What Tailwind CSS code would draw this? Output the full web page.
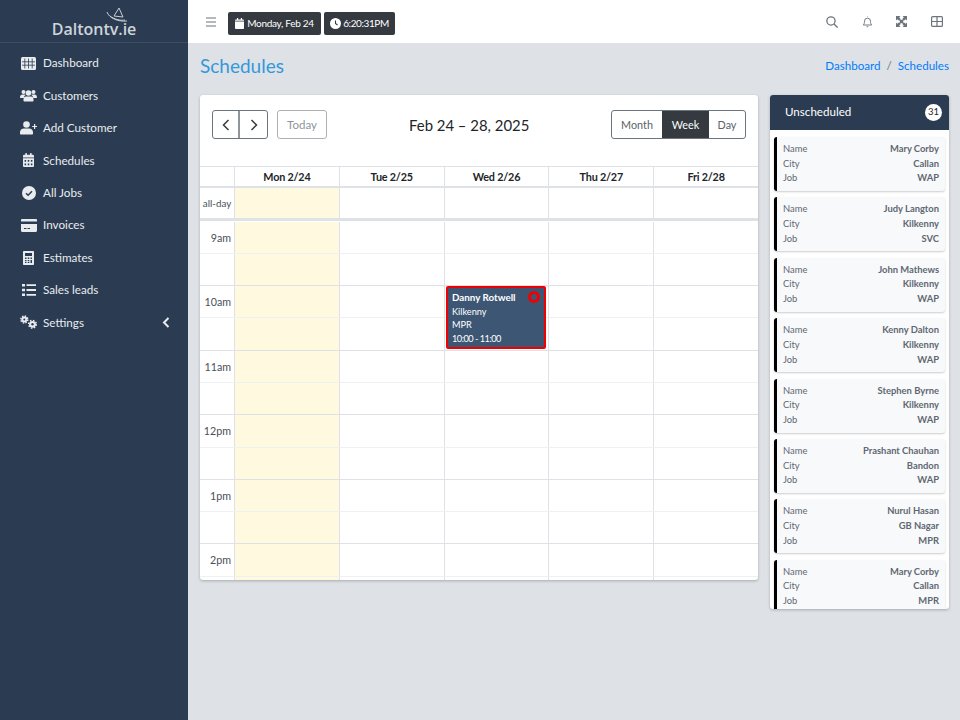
<!DOCTYPE html>
<html lang="en">
<head>
  <meta charset="UTF-8">
  <title>Schedules</title>
  <script src="https://cdn.jsdelivr.net/npm/@tailwindcss/browser@4"></script>
</head>
<body class="font-['Lato','Noto_Sans',sans-serif] bg-[#dee2e6] text-[#343a40] h-[720px] overflow-hidden">
  <div class="flex h-[720px]">
    <!-- Sidebar -->
    <aside class="w-[188px] shrink-0 bg-[#2b3c52] text-[#e9ecef]">
      <div class="h-[43px] border-b border-[#3d4d62] relative flex justify-center items-end pb-[2px]">
        <svg class="absolute left-[106px] top-[7px] w-[22px] h-[16px]" viewBox="0 0 22 16" fill="none" stroke="#c9ced4" stroke-width="1"><path d="M1 5c2 6 11 10 20 9"/><path d="M13 1L8 9l9 1z"/><path d="M4 9c4 3 10 5 15 4"/></svg>
        <span class="font-['Open_Sans'] font-semibold text-[16px] leading-[22px] text-[#ced4da]">Daltontv.ie</span>
      </div>
      <nav class="pt-[4px] text-[11.700px]">
        <a class="flex items-center h-[32.400px] pl-[21px] gap-[7px]"><svg class="w-[15px] h-[13px]" viewBox="0 0 15 13"><rect width="15" height="13" rx="1.500" fill="currentColor"/><path d="M3.800 1.500v10M7.500 1.500v10M11.200 1.500v10M1 4.800h13M1 8.200h13" stroke="#2b3c52" stroke-width=".8"/></svg>Dashboard</a>
        <a class="flex items-center h-[32.400px] pl-[20px] gap-[6px]"><svg class="w-[17px] h-[15px]" viewBox="0 0 17 14" fill="currentColor"><circle cx="3.500" cy="3.500" r="2"/><circle cx="13.500" cy="3.500" r="2"/><circle cx="8.500" cy="4.500" r="2.800"/><path d="M0 9c0-2 1-3 2.500-3h2c.5 0 1 .2 1.300.5C4.500 7.300 4 8.200 3.800 9.500H1c-.6 0-1-.1-1-.5zM17 9c0-2-1-3-2.500-3h-2c-.5 0-1 .2-1.300.500 1.300.8 1.800 1.700 2 3H16c.6 0 1-.1 1-.5zM6 8h5c1.500 0 2.500 1.200 2.500 2.800V12c0 .6-.4 1-1 1h-8c-.6 0-1-.4-1-1v-1.200C3.500 9.200 4.500 8 6 8z"/></svg>Customers</a>
        <a class="flex items-center h-[32.400px] pl-[20px] gap-[6px]"><svg class="w-[17px] h-[14px]" viewBox="0 0 17 14" fill="currentColor"><circle cx="6.500" cy="3.500" r="3.300"/><path d="M4 7.500h5c2.200 0 4 1.600 4 3.700V12.500c0 .6-.4 1-1 1H1c-.6 0-1-.4-1-1v-1.300C0 9.100 1.800 7.500 4 7.500zM14 3h1.200v1.900H17v1.200h-1.800V8H14V6.100h-1.800V4.900H14z"/></svg>Add Customer</a>
        <a class="flex items-center h-[32.400px] pl-[23px] gap-[9px]"><svg class="w-[11px] h-[14px]" viewBox="0 0 448 512" preserveAspectRatio="none" fill="currentColor"><path d="M0 464c0 26.500 21.500 48 48 48h352c26.500 0 48-21.500 48-48V192H0v272zm320-196c0-6.600 5.400-12 12-12h40c6.600 0 12 5.400 12 12v40c0 6.600-5.400 12-12 12h-40c-6.600 0-12-5.400-12-12v-40zm0 128c0-6.600 5.400-12 12-12h40c6.600 0 12 5.400 12 12v40c0 6.600-5.400 12-12 12h-40c-6.600 0-12-5.400-12-12v-40zM192 268c0-6.600 5.400-12 12-12h40c6.600 0 12 5.400 12 12v40c0 6.600-5.400 12-12 12h-40c-6.600 0-12-5.400-12-12v-40zm0 128c0-6.600 5.400-12 12-12h40c6.600 0 12 5.400 12 12v40c0 6.600-5.400 12-12 12h-40c-6.600 0-12-5.400-12-12v-40zM64 268c0-6.600 5.400-12 12-12h40c6.600 0 12 5.400 12 12v40c0 6.600-5.400 12-12 12H76c-6.600 0-12-5.400-12-12v-40zm0 128c0-6.600 5.400-12 12-12h40c6.600 0 12 5.400 12 12v40c0 6.600-5.400 12-12 12H76c-6.600 0-12-5.400-12-12v-40zM400 64h-48V16c0-8.800-7.200-16-16-16h-32c-8.800 0-16 7.200-16 16v48H160V16c0-8.800-7.200-16-16-16h-32c-8.800 0-16 7.200-16 16v48H48C21.500 64 0 85.500 0 112v48h448v-48c0-26.500-21.500-48-48-48z"/></svg>Schedules</a>
        <a class="flex items-center h-[32.400px] pl-[22px] gap-[7px]"><svg class="w-[14px] h-[14px]" viewBox="0 0 14 14"><circle cx="7" cy="7" r="7" fill="currentColor"/><path d="M4 7.200l2.100 2.100L10 5.300" fill="none" stroke="#2b3c52" stroke-width="1.500"/></svg>All Jobs</a>
        <a class="flex items-center h-[32.400px] pl-[21px] gap-[6px]"><svg class="w-[16px] h-[13px]" viewBox="0 0 16 13" fill="currentColor"><path d="M1.200 0h13.600c.7 0 1.200.5 1.200 1.200V2.500H0V1.200C0 .5.500 0 1.200 0zM0 5h16v6.800c0 .7-.5 1.200-1.200 1.200H1.200C.5 13 0 12.500 0 11.800zm3 4v1h2.500V9zm3.500 0v1H9V9z" fill-rule="evenodd"/></svg>Invoices</a>
        <a class="flex items-center h-[32.400px] pl-[23px] gap-[9px]"><svg class="w-[11px] h-[14px]" viewBox="0 0 11 14" fill="currentColor" fill-rule="evenodd"><path d="M1 0h9c.6 0 1 .4 1 1v12c0 .6-.4 1-1 1H1c-.6 0-1-.4-1-1V1c0-.6.4-1 1-1zm1 2v3h7V2zm0 4.500V8h1.500V6.500zm2.700 0V8h1.600V6.500zm2.800 0V8H9V6.500zM2 9v1.300h1.500V9zm2.700 0v1.300h1.600V9zm2.800 0v3H9V9zM2 11v1h1.500v-1zm2.700 0v1h1.600v-1z"/></svg>Estimates</a>
        <a class="flex items-center h-[32.400px] pl-[22px] gap-[7px]"><svg class="w-[14px] h-[12px]" viewBox="0 0 14 12" fill="currentColor"><path d="M0 0h3v2.500H0zM4.500.300H14v1.800H4.500zM0 4.700h3v2.600H0zM4.500 5.100H14v1.800H4.500zM0 9.500h3V12H0zM4.500 9.900H14v1.800H4.500z"/></svg>Sales leads</a>
        <a class="flex items-center h-[32.400px] pl-[20px] gap-[6px] relative"><svg class="w-[17px] h-[14px]" viewBox="0 0 17 14"><circle cx="4.300" cy="4.500" r="3" fill="currentColor"/><circle cx="4.300" cy="4.500" r="3.500" fill="none" stroke="currentColor" stroke-width="1.400" stroke-dasharray="1.500 1.250"/><circle cx="4.300" cy="4.500" r="1" fill="#2b3c52"/><circle cx="12.500" cy="9.300" r="3.400" fill="currentColor"/><circle cx="12.500" cy="9.300" r="3.900" fill="none" stroke="currentColor" stroke-width="1.400" stroke-dasharray="1.500 1.560"/><circle cx="12.500" cy="9.300" r="1.200" fill="#2b3c52"/></svg>Settings
          <svg class="absolute right-[18px] top-[11px] w-[8px] h-[11px]" viewBox="0 0 8 11" fill="none" stroke="currentColor" stroke-width="2"><path d="M6.500 1L2 5.500 6.500 10"/></svg></a>
      </nav>
    </aside>

    <div class="flex-1 min-w-0">
      <!-- Top bar -->
      <header class="h-[43px] bg-white flex items-center pl-[18px] pr-[17px]">
        <svg class="w-[10px] h-[10px] mr-[12px]" viewBox="0 0 10 10" fill="none" stroke="#6c757d" stroke-width="1.200"><path d="M0 1h10M0 5h10M0 9h10"/></svg>
        <div class="flex gap-[3px] text-[10px] text-white mt-[3px]">
          <span class="h-[23px] w-[93px] bg-[#343a40] rounded-[2px] flex items-center justify-center gap-[3px] tracking-[-0.300px]"><svg class="w-[9px] h-[11px]" viewBox="0 0 448 512" preserveAspectRatio="none" fill="currentColor"><path d="M0 160h448v304c0 26.500-21.500 48-48 48H48c-26.500 0-48-21.500-48-48zM400 64h-48V16c0-8.800-7.200-16-16-16h-32c-8.800 0-16 7.200-16 16v48H160V16c0-8.800-7.200-16-16-16h-32c-8.800 0-16 7.200-16 16v48H48C21.500 64 0 85.500 0 112v16h448v-16c0-26.500-21.500-48-48-48z"/></svg>Monday, Feb 24</span>
          <span class="h-[23px] w-[71px] bg-[#343a40] rounded-[2px] flex items-center justify-center gap-[2px] tracking-[-0.400px]"><svg class="w-[11px] h-[11px]" viewBox="0 0 11 11"><circle cx="5.500" cy="5.500" r="5.500" fill="currentColor"/><path d="M5.500 2.500v3l2 1.500" fill="none" stroke="#343a40" stroke-width="1.100"/></svg>6:20:31PM</span>
        </div>
        <div class="ml-auto flex items-center text-[#6c757d]">
          <svg class="w-[12px] h-[12px]" viewBox="0 0 14 14" fill="none" stroke="currentColor" stroke-width="1.500"><circle cx="5.800" cy="5.800" r="4.800"/><path d="M9.300 9.300L13.500 13.500"/></svg>
          <svg class="w-[11px] h-[12px] ml-[24px]" viewBox="0 0 12 14" fill="none" stroke="currentColor" stroke-width="1.100"><path d="M1 10.500c1-1 1.500-2 1.500-4.500a3.500 3.500 0 0 1 7 0c0 2.500.5 3.500 1.500 4.500z"/><path d="M6 1V.5M5 12.500h2"/></svg>
          <svg class="w-[11px] h-[11px] ml-[23px]" viewBox="0 0 11 11" fill="currentColor"><path d="M0 0h4.500L3.200 1.300 4.800 3.200 3.200 4.800 1.300 3.200 0 4.500zM11 0v4.500L9.700 3.200 7.800 4.800 6.200 3.200 7.800 1.300 6.500 0zM0 11V6.500l1.300 1.300 1.900-1.600 1.600 1.600-1.600 1.900L4.500 11zM11 11H6.500l1.300-1.300-1.600-1.900 1.600-1.600 1.900 1.600L11 6.500z"/><rect x="3.800" y="3.800" width="3.400" height="3.400"/></svg>
          <svg class="w-[12px] h-[11px] ml-[24px]" viewBox="0 0 12 11" fill="none" stroke="currentColor" stroke-width="1.200"><rect x=".6" y=".6" width="10.800" height="9.800" rx="1"/><path d="M.6 5.500h10.800M6 .6v9.800"/></svg>
        </div>
      </header>

      <!-- Page heading -->
      <div class="flex items-center justify-between h-[52px] pl-[12px] pr-[11px]">
        <h1 class="text-[19px] text-[#3498db] leading-none mt-[-7px]">Schedules</h1>
        <div class="text-[11.600px] text-[#007bff] mt-[-7px]">Dashboard <span class="text-[#6c757d] mx-[3px]">/</span> Schedules</div>
      </div>

      <div class="flex pl-[12px] pr-[11px] gap-[12px] items-start">
        <!-- Calendar card -->
        <section class="w-[558px] h-[485px] bg-white rounded-[3px] shadow-[0_1px_3px_rgba(0,0,0,0.25)] overflow-hidden">
          <div class="h-[71px] px-[12px] pt-[15px] flex items-start relative">
            <div class="flex h-[29px] border border-[#6c757d] rounded-[3px] text-[#343a40]">
              <button class="w-[27px] flex items-center justify-center border-r-2 border-[#8f959a]"><svg class="w-[8px] h-[12px]" viewBox="0 0 8 12" fill="none" stroke="currentColor" stroke-width="1.500"><path d="M6.500 1L1.500 6l5 5"/></svg></button>
              <button class="w-[27px] flex items-center justify-center"><svg class="w-[8px] h-[12px]" viewBox="0 0 8 12" fill="none" stroke="currentColor" stroke-width="1.500"><path d="M1.500 1l5 5-5 5"/></svg></button>
            </div>
            <button class="ml-[9px] w-[50px] h-[29px] pt-[1px] border border-[#adb1b5] rounded-[3px] text-[11.500px] text-[#8f959a]">Today</button>
            <h2 class="absolute left-[209px] w-[120px] top-[20px] text-center text-[14.900px] leading-[20px] text-[#212529] whitespace-nowrap">Feb 24 – 28, 2025</h2>
            <div class="ml-auto flex h-[29px] border border-[#6c757d] rounded-[3px] text-[10.800px] text-[#5a6268] overflow-hidden">
              <span class="w-[50px] pt-[2px] flex items-center justify-center">Month</span>
              <span class="w-[47px] pt-[2px] flex items-center justify-center bg-[#343a40] text-white">Week</span>
              <span class="w-[36px] pt-[2px] flex items-center justify-center">Day</span>
            </div>
          </div>

          <div class="grid grid-cols-[34px_repeat(5,1fr)] h-[22px] border-t border-b-2 border-[#dee2e6] text-[10.800px] tracking-[-0.200px] font-bold text-[#212529]">
            <div></div>
            <div class="border-l border-[#dee2e6] flex items-center justify-center pt-[1px]">Mon 2/24</div>
            <div class="border-l border-[#dee2e6] flex items-center justify-center pt-[1px]">Tue 2/25</div>
            <div class="border-l border-[#dee2e6] flex items-center justify-center pt-[1px]">Wed 2/26</div>
            <div class="border-l border-[#dee2e6] flex items-center justify-center pt-[1px]">Thu 2/27</div>
            <div class="border-l border-[#dee2e6] flex items-center justify-center pt-[1px]">Fri 2/28</div>
          </div>
          <div class="grid grid-cols-[34px_repeat(5,1fr)] h-[33px] border-b-[3px] border-[#dee2e6] text-[9.800px] text-[#495057]">
            <div class="flex items-center justify-center">all-day</div>
            <div class="border-l border-[#dee2e6] bg-[#fffadf]"></div>
            <div class="border-l border-[#dee2e6]"></div>
            <div class="border-l border-[#dee2e6]"></div>
            <div class="border-l border-[#dee2e6]"></div>
            <div class="border-l border-[#dee2e6]"></div>
          </div>

          <!-- Time grid, rows filled by the script below -->
          <div class="relative pt-[0.500px]">
            <div id="slots"></div>
            <div class="absolute left-[246px] top-[65px] w-[100px] h-[63px] bg-[#3d5673] border-2 border-[#f00000] rounded-[2px] text-white text-[9.200px] leading-[13.500px] pl-[4px] pt-[3px]">
              <div class="font-bold text-[9.800px]">Danny Rotwell</div>
              <div>Kilkenny</div>
              <div>MPR</div>
              <div class="tracking-[-0.500px]">10:00 - 11:00</div>
              <span class="absolute right-[4px] top-[3px] w-[12px] h-[12px] rounded-full border-[3px] border-[#f00000] bg-[#3d5673]"></span>
            </div>
          </div>
        </section>

        <!-- Unscheduled list -->
        <section class="w-[179px] h-[514px] bg-white rounded-[3px] shadow-[0_1px_3px_rgba(0,0,0,0.25)] overflow-hidden">
          <div class="h-[35px] pb-[1px] bg-[#2b3c52] flex items-center justify-between pl-[15px] pr-[7px] text-white text-[11.600px]">
            <span>Unscheduled</span>
            <span class="w-[17px] h-[17px] rounded-full bg-white text-[#212529] text-[9.500px] flex items-center justify-center">31</span>
          </div>
          <div id="cards" class="px-[4px] pt-[7px] flex flex-col gap-[6.400px]"></div>
        </section>
      </div>
    </div>
  </div>

  <script>
    const hours = ['9am', '10am', '11am', '12pm', '1pm', '2pm'];
    let rows = '';
    hours.forEach(function (h) {
      [h, ''].forEach(function (label, i) {
        const line = i === 0 ? 'border-[#eef0f2]' : 'border-[#dee2e6]';
        rows += '<div class="grid grid-cols-[34px_repeat(5,1fr)] h-[32.300px] border-b ' + line + ' text-[10.700px] text-[#495057]">'
          + '<div class="text-right pr-[3px] pt-[9px] leading-[14px]">' + label + '</div>'
          + '<div class="border-l border-[#dee2e6] bg-[#fffadf]"></div>'
          + '<div class="border-l border-[#dee2e6]"></div>'
          + '<div class="border-l border-[#dee2e6]"></div>'
          + '<div class="border-l border-[#dee2e6]"></div>'
          + '<div class="border-l border-[#dee2e6]"></div></div>';
      });
    });
    document.getElementById('slots').innerHTML = rows;

    const jobs = [
      ['Mary Corby', 'Callan', 'WAP'],
      ['Judy Langton', 'Kilkenny', 'SVC'],
      ['John Mathews', 'Kilkenny', 'WAP'],
      ['Kenny Dalton', 'Kilkenny', 'WAP'],
      ['Stephen Byrne', 'Kilkenny', 'WAP'],
      ['Prashant Chauhan', 'Bandon', 'WAP'],
      ['Nurul Hasan', 'GB Nagar', 'MPR'],
      ['Mary Corby', 'Callan', 'MPR']
    ];
    document.getElementById('cards').innerHTML = jobs.map(function (j) {
      return '<div class="h-[54px] shrink-0 bg-[#f8f9fa] border-l-[3px] border-black rounded-[3px] shadow-[0_1px_2px_rgba(0,0,0,0.2)] px-[6px] pt-[5px] text-[9.400px] leading-[14.700px] text-[#5f6873]">'
        + '<div class="flex justify-between"><span>Name</span><b>' + j[0] + '</b></div>'
        + '<div class="flex justify-between"><span>City</span><b>' + j[1] + '</b></div>'
        + '<div class="flex justify-between"><span>Job</span><b>' + j[2] + '</b></div></div>';
    }).join('');
  </script>
</body>
</html>
